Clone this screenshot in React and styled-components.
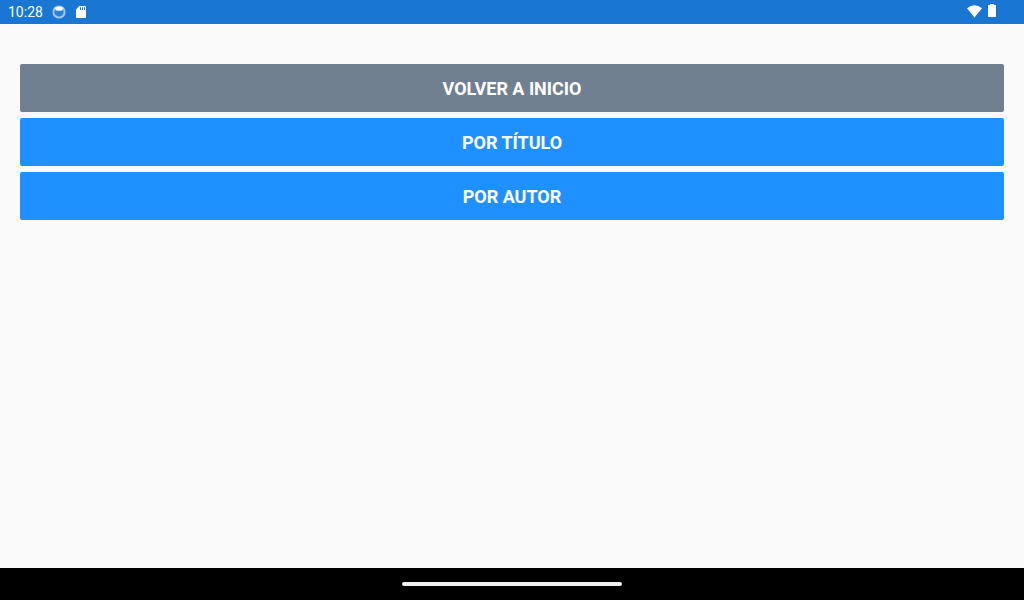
import React from "react";
import styled, { createGlobalStyle } from "styled-components";

const GlobalStyle = createGlobalStyle`
  body { margin: 0; font-family: Roboto, sans-serif; }
`;

const Screen = styled.div`
  display: flex;
  flex-direction: column;
  height: 100vh;
  background: #fafafa;
`;

const StatusBar = styled.header`
  display: flex;
  align-items: center;
  justify-content: space-between;
  box-sizing: border-box;
  height: 24px;
  padding: 0 28px 0 8px;
  background: #1976d2;
  color: #fff;
`;

const StatusGroup = styled.div`
  display: flex;
  align-items: center;
  height: 24px;
`;

const Clock = styled.span`
  width: 44px;
  font-size: 14px;
  line-height: 24px;
`;

const StatusIcon = styled.svg`
  display: block;
  margin-left: ${({ $gap = 0 }) => $gap}px;
`;

const Actions = styled.main`
  display: flex;
  flex: 1;
  flex-direction: column;
  gap: 6px;
  padding: 40px 20px;
`;

const ActionButton = styled.button`
  box-sizing: border-box;
  height: 48px;
  padding: 2px 0 0;
  border: 0;
  border-radius: 2px;
  background: ${({ $color }) => $color};
  color: #fff;
  font: 700 18px/46px Roboto, sans-serif;
  letter-spacing: -0.02px;
  text-transform: uppercase;
`;

const NavigationBar = styled.footer`
  display: flex;
  align-items: center;
  justify-content: center;
  height: 32px;
  background: #000;
`;

const HomeHandle = styled.div`
  width: 220px;
  height: 4px;
  border-radius: 2px;
  background: #f2f2f2;
`;

export default function App() {
  return (
    <Screen>
      <GlobalStyle />
      <StatusBar>
        <StatusGroup>
          <Clock>10:28</Clock>
          <StatusIcon width="14" height="24" viewBox="0 0 14 24">
            <circle cx="7" cy="12" r="5.6" fill="#2980d8" stroke="#a3c8ed" strokeWidth="2" />
            <path d="M3 7.7Q7 5.6 11 7.7L10.4 10.2Q7 11.2 3.6 10.2Z" fill="#fff" />
          </StatusIcon>
          <StatusIcon $gap={10} width="10" height="24" viewBox="0 0 10 24">
            <path d="M3.4 6H9.2Q10 6 10 6.8V17.2Q10 18 9.2 18H.8Q0 18 0 17.2V9.4Z" fill="#fff" />
            <path d="M4.5 7.2V10M6.5 7.2V10M8.5 7.2V10" stroke="#1976d2" />
          </StatusIcon>
        </StatusGroup>
        <StatusGroup>
          <StatusIcon width="16" height="24" viewBox="0 0 16 24">
            <path d="M1 8.2Q8.5 2.5 16 8.2L8.5 17.6Z" fill="#fff" />
          </StatusIcon>
          <StatusIcon $gap={5} width="9" height="24" viewBox="0 0 9 24">
            <path d="M3 4H7V5H8.2Q9 5 9 5.8V16.2Q9 17 8.2 17H1.8Q1 17 1 16.2V5.8Q1 5 1.8 5H3Z" fill="#fff" />
          </StatusIcon>
        </StatusGroup>
      </StatusBar>
      <Actions>
        <ActionButton $color="#708090">Volver a inicio</ActionButton>
        <ActionButton $color="#1e90ff">Por título</ActionButton>
        <ActionButton $color="#1e90ff">Por autor</ActionButton>
      </Actions>
      <NavigationBar>
        <HomeHandle />
      </NavigationBar>
    </Screen>
  );
}
